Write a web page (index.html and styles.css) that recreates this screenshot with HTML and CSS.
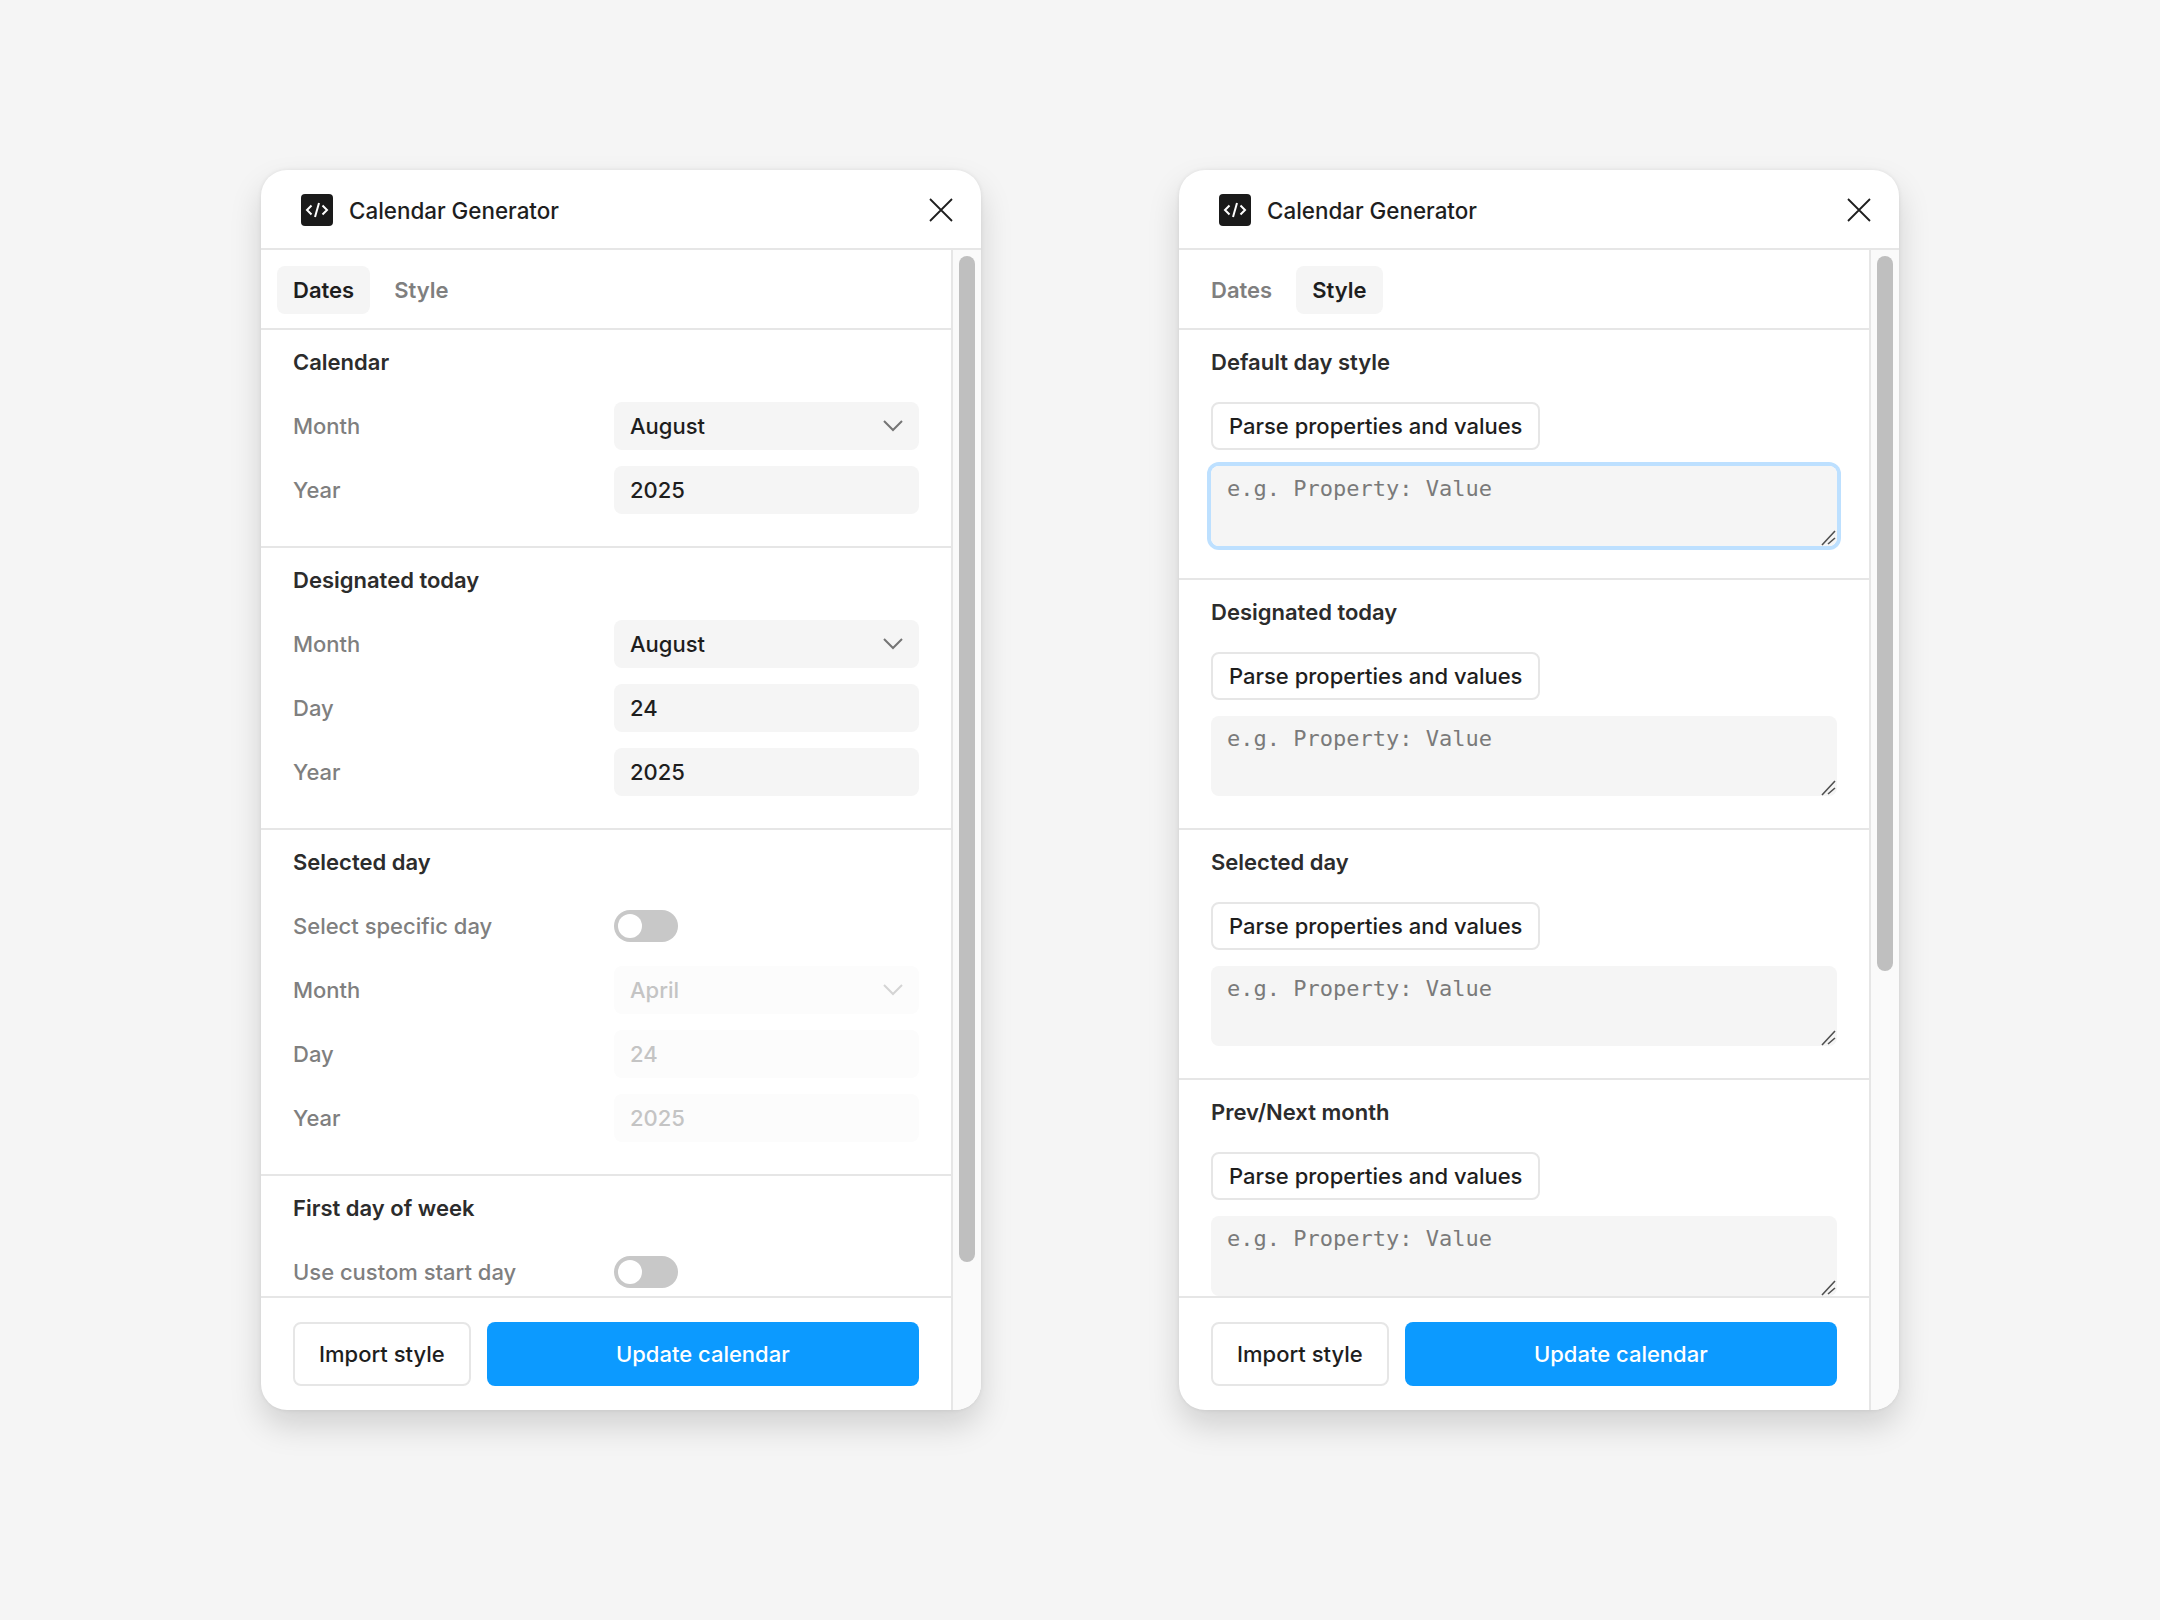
FILE: index.html
```html
<!DOCTYPE html>
<html lang="en">
<head>
    <meta charset="UTF-8">
    <title>Calendar Generator</title>
    <link rel="stylesheet" href="styles.css">
</head>
<body>
    <div class="panel">
        <div class="header">
            <div class="logo">
                <svg width="32" height="32" viewBox="0 0 32 32" fill="none" stroke="#fff" stroke-width="2">
                    <path d="M10.500 11.500 6 16l4.500 4.500"/>
                    <path d="M21.500 11.500 26 16l-4.500 4.500"/>
                    <path d="M18 9l-4 14"/>
                </svg>
            </div>
            <span class="title">Calendar Generator</span>
            <svg class="close" width="24" height="24" viewBox="0 0 24 24" fill="none" stroke="#1e1e1e" stroke-width="1.800">
                <path d="M1 1l22 22M23 1 1 23"/>
            </svg>
        </div>
        <div class="body">
            <div class="main">
                <div class="tabs">
                    <button class="tab active">Dates</button>
                    <button class="tab">Style</button>
                </div>
                <div class="content">
                    <div class="section">
                        <h3>Calendar</h3>
                        <div class="rows">
                            <div class="row">
                                <label>Month</label>
                                <div class="select-wrap">
                                    <select><option>August</option></select>
                                    <svg class="chevron" width="20" height="12" viewBox="0 0 20 12" fill="none" stroke="#757575" stroke-width="2"><path d="M1 1l9 9 9-9"/></svg>
                                </div>
                            </div>
                            <div class="row">
                                <label>Year</label>
                                <input type="text" value="2025">
                            </div>
                        </div>
                    </div>
                    <div class="section">
                        <h3>Designated today</h3>
                        <div class="rows">
                            <div class="row">
                                <label>Month</label>
                                <div class="select-wrap">
                                    <select><option>August</option></select>
                                    <svg class="chevron" width="20" height="12" viewBox="0 0 20 12" fill="none" stroke="#757575" stroke-width="2"><path d="M1 1l9 9 9-9"/></svg>
                                </div>
                            </div>
                            <div class="row">
                                <label>Day</label>
                                <input type="text" value="24">
                            </div>
                            <div class="row">
                                <label>Year</label>
                                <input type="text" value="2025">
                            </div>
                        </div>
                    </div>
                    <div class="section">
                        <h3>Selected day</h3>
                        <div class="rows">
                            <div class="row">
                                <label>Select specific day</label>
                                <div class="toggle"><div class="knob"></div></div>
                            </div>
                            <div class="row">
                                <label>Month</label>
                                <div class="select-wrap">
                                    <select disabled><option>April</option></select>
                                    <svg class="chevron" width="20" height="12" viewBox="0 0 20 12" fill="none" stroke="#d4d4d4" stroke-width="2"><path d="M1 1l9 9 9-9"/></svg>
                                </div>
                            </div>
                            <div class="row">
                                <label>Day</label>
                                <input type="text" value="24" disabled>
                            </div>
                            <div class="row">
                                <label>Year</label>
                                <input type="text" value="2025" disabled>
                            </div>
                        </div>
                    </div>
                    <div class="section">
                        <h3>First day of week</h3>
                        <div class="rows">
                            <div class="row">
                                <label>Use custom start day</label>
                                <div class="toggle"><div class="knob"></div></div>
                            </div>
                        </div>
                    </div>
                </div>
                <div class="footer">
                    <button class="btn">Import style</button>
                    <button class="btn primary">Update calendar</button>
                </div>
            </div>
            <div class="rail"><div class="thumb"></div></div>
        </div>
    </div>

    <div class="panel">
        <div class="header">
            <div class="logo">
                <svg width="32" height="32" viewBox="0 0 32 32" fill="none" stroke="#fff" stroke-width="2">
                    <path d="M10.500 11.500 6 16l4.500 4.500"/>
                    <path d="M21.500 11.500 26 16l-4.500 4.500"/>
                    <path d="M18 9l-4 14"/>
                </svg>
            </div>
            <span class="title">Calendar Generator</span>
            <svg class="close" width="24" height="24" viewBox="0 0 24 24" fill="none" stroke="#1e1e1e" stroke-width="1.800">
                <path d="M1 1l22 22M23 1 1 23"/>
            </svg>
        </div>
        <div class="body">
            <div class="main">
                <div class="tabs">
                    <button class="tab">Dates</button>
                    <button class="tab active">Style</button>
                </div>
                <div class="content">
                    <div class="section">
                        <h3>Default day style</h3>
                        <button class="btn small">Parse properties and values</button>
                        <div class="area focused">
                            <textarea placeholder="e.g. Property: Value"></textarea>
                            <svg class="grip" width="16" height="16" viewBox="0 0 16 16" fill="none" stroke="#505050" stroke-width="1.600"><path d="M2 15 15 1M8 14l7-6"/></svg>
                        </div>
                    </div>
                    <div class="section">
                        <h3>Designated today</h3>
                        <button class="btn small">Parse properties and values</button>
                        <div class="area">
                            <textarea placeholder="e.g. Property: Value"></textarea>
                            <svg class="grip" width="16" height="16" viewBox="0 0 16 16" fill="none" stroke="#505050" stroke-width="1.600"><path d="M2 15 15 1M8 14l7-6"/></svg>
                        </div>
                    </div>
                    <div class="section">
                        <h3>Selected day</h3>
                        <button class="btn small">Parse properties and values</button>
                        <div class="area">
                            <textarea placeholder="e.g. Property: Value"></textarea>
                            <svg class="grip" width="16" height="16" viewBox="0 0 16 16" fill="none" stroke="#505050" stroke-width="1.600"><path d="M2 15 15 1M8 14l7-6"/></svg>
                        </div>
                    </div>
                    <div class="section">
                        <h3>Prev/Next month</h3>
                        <button class="btn small">Parse properties and values</button>
                        <div class="area">
                            <textarea placeholder="e.g. Property: Value"></textarea>
                            <svg class="grip" width="16" height="16" viewBox="0 0 16 16" fill="none" stroke="#505050" stroke-width="1.600"><path d="M2 15 15 1M8 14l7-6"/></svg>
                        </div>
                    </div>
                </div>
                <div class="footer">
                    <button class="btn">Import style</button>
                    <button class="btn primary">Update calendar</button>
                </div>
            </div>
            <div class="rail"><div class="thumb short"></div></div>
        </div>
    </div>
</body>
</html>
```

FILE: styles.css
```css
* {
    box-sizing: border-box;
}
body {
    margin: 0;
    padding-top: 170px;
    height: 1620px;
    display: flex;
    justify-content: center;
    align-items: flex-start;
    gap: 198px;
    background-color: #f5f5f5;
    font-family: Inter, "Liberation Sans", sans-serif;
    font-size: 24px;
    color: #1e1e1e;
}
.panel {
    width: 720px;
    height: 1240px;
    display: flex;
    flex-direction: column;
    background: white;
    border-radius: 26px;
    overflow: hidden;
    box-shadow: 0 16px 32px rgba(0, 0, 0, 0.15), 0 0 4px rgba(0, 0, 0, 0.08);
}
.header {
    height: 80px;
    flex: none;
    display: flex;
    align-items: center;
    padding: 2px 28px 0 40px;
    border-bottom: 2px solid #e6e6e6;
}
.logo {
    width: 32px;
    height: 32px;
    border-radius: 4px;
    background: #1a1a1a;
}
.logo svg {
    display: block;
}
.title {
    margin-left: 16px;
    font-weight: 500;
    font-size: 22.4px;
    flex: 1;
}
.body {
    flex: 1;
    min-height: 0;
    display: flex;
}
.main {
    flex: 1;
    min-width: 0;
    display: flex;
    flex-direction: column;
}
.rail {
    width: 30px;
    flex: none;
    padding: 6px;
    background: #fafafa;
    border-left: 2px solid #e6e6e6;
}
.thumb {
    height: 1006px;
    border-radius: 8px;
    background: #bfbfbf;
}
.thumb.short {
    height: 715px;
}
.tabs {
    height: 80px;
    flex: none;
    display: flex;
    gap: 8px;
    padding: 16px;
    border-bottom: 2px solid #e6e6e6;
}
.tab {
    height: 48px;
    padding: 0 16px;
    border: none;
    border-radius: 8px;
    background: none;
    font: 600 22px Inter, sans-serif;
    color: #7f7f7f;
}
.tab.active {
    background: #f5f5f5;
    color: #1e1e1e;
}
.content {
    flex: 1;
    min-height: 0;
    overflow: hidden;
}
.section {
    padding: 16px 32px 32px;
    border-bottom: 2px solid #e6e6e6;
}
.section h3 {
    margin: 0 0 24px;
    font-size: 22px;
    font-weight: 600;
    line-height: 32px;
    color: #2c2c2c;
}
.rows {
    display: flex;
    flex-direction: column;
    gap: 16px;
}
.row {
    display: grid;
    grid-template-columns: 321px 305px;
    align-items: center;
    min-height: 48px;
}
.row label {
    font-size: 22px;
    font-weight: 500;
    color: #7f7f7f;
}
input, select {
    display: block;
    width: 100%;
    height: 48px;
    padding: 0 16px;
    border: none;
    border-radius: 8px;
    background: #f5f5f5;
    font: 500 22px Inter, sans-serif;
    color: #1e1e1e;
    opacity: 1;
    appearance: none;
}
input:disabled, select:disabled {
    background: #fcfcfc;
    color: #c4c4c4;
}
.select-wrap {
    position: relative;
}
.chevron {
    position: absolute;
    top: 18px;
    right: 16px;
}
.toggle {
    width: 64px;
    height: 32px;
    padding: 4px;
    border-radius: 16px;
    background: #c8c8c8;
}
.knob {
    width: 24px;
    height: 24px;
    border-radius: 50%;
    background: white;
}
.btn {
    height: 64px;
    padding: 0 24px;
    border: 2px solid #e6e6e6;
    border-radius: 8px;
    background: white;
    font: 500 22px Inter, sans-serif;
    color: #1e1e1e;
}
.btn.small {
    display: block;
    height: 48px;
    padding: 0 16px;
}
.btn.primary {
    flex: 1;
    border: none;
    background: #0c9aff;
    color: white;
}
.area {
    position: relative;
    height: 80px;
    margin-top: 16px;
    border-radius: 8px;
}
.area.focused {
    box-shadow: 0 0 0 4px #bde0ff;
}
.grip {
    position: absolute;
    right: 1px;
    bottom: 0;
}
textarea {
    display: block;
    width: 100%;
    height: 80px;
    padding: 7px 16px;
    border: none;
    outline: none;
    resize: none;
    border-radius: 8px;
    background: #f5f5f5;
    font: 22px/32px "DejaVu Sans Mono", monospace;
}
textarea::placeholder {
    color: #7a7a7a;
}
.footer {
    flex: none;
    display: flex;
    gap: 16px;
    padding: 24px 32px;
    height: 114px;
    border-top: 2px solid #e6e6e6;
}
```
